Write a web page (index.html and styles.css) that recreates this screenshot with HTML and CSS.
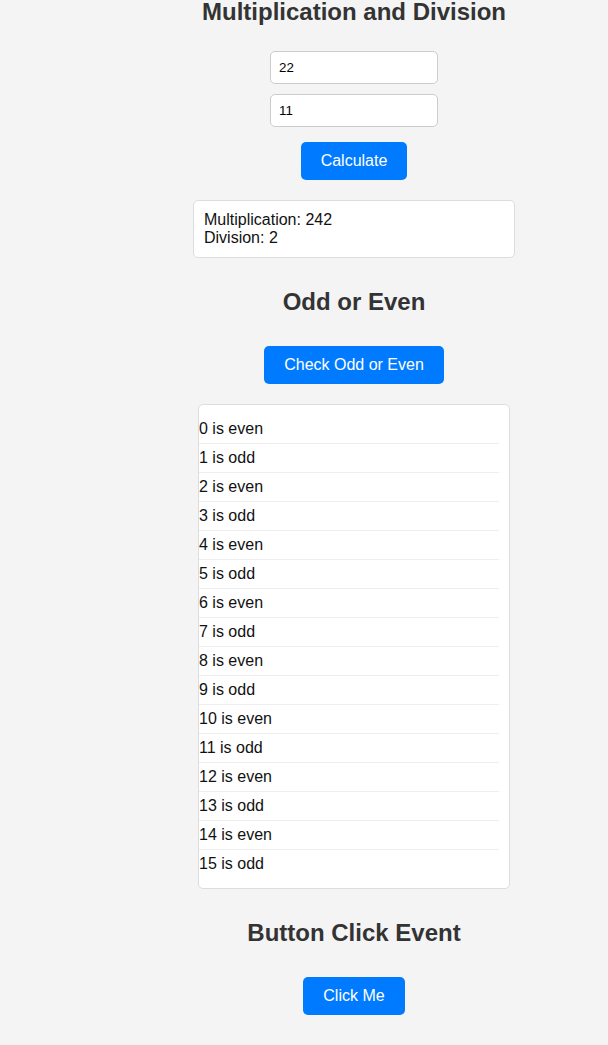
FILE: index.html
```html
<!DOCTYPE html>
<html>
<head>
<meta charset="utf-8">
<link rel="stylesheet" href="styles.css">
</head>
<body>
<main class="page">
  <section class="section">
    <h2 class="title">Multiplication and Division</h2>
    <div class="inputs">
      <input class="field" type="text" value="22">
      <input class="field" type="text" value="11">
    </div>
    <button class="btn">Calculate</button>
    <div class="result">Multiplication: 242<br>Division: 2</div>
  </section>
  <section class="section">
    <h2 class="title">Odd or Even</h2>
    <button class="btn">Check Odd or Even</button>
    <ul class="list">
      <li>0 is even</li>
      <li>1 is odd</li>
      <li>2 is even</li>
      <li>3 is odd</li>
      <li>4 is even</li>
      <li>5 is odd</li>
      <li>6 is even</li>
      <li>7 is odd</li>
      <li>8 is even</li>
      <li>9 is odd</li>
      <li>10 is even</li>
      <li>11 is odd</li>
      <li>12 is even</li>
      <li>13 is odd</li>
      <li>14 is even</li>
      <li>15 is odd</li>
    </ul>
  </section>
  <section class="section">
    <h2 class="title">Button Click Event</h2>
    <button class="btn">Click Me</button>
  </section>
</main>
</body>
</html>
```
FILE: styles.css
```css
html, body {
  margin: 0;
  padding: 0;
  background: #f4f4f4;
}
body {
  font-family: "Liberation Sans", Arial, sans-serif;
  color: #222;
  overflow: hidden;
}
.page {
  margin-left: 100px;
  margin-top: -2px;
  display: flex;
  flex-direction: column;
  align-items: center;
}
.section {
  display: flex;
  flex-direction: column;
  align-items: center;
  margin-bottom: 10px;
}
.title {
  font-size: 24px;
  font-weight: bold;
  color: #333;
  margin: 0 0 20px;
  line-height: normal;
}
.section + .section .title {
  margin-top: 20px;
}
.inputs {
  display: flex;
  flex-direction: column;
  gap: 10px;
  margin: 5px 0;
}
.field {
  width: 168px;
  padding: 8px;
  border: 1px solid #ccc;
  border-radius: 5px;
  font-family: "Liberation Sans", Arial, sans-serif;
  font-size: 13.33px;
  color: #000;
  background: #fff;
  margin: 0;
  line-height: 15px;
  height: 33px;
  box-sizing: border-box;
}
.btn {
  background: #007bff;
  color: #fff;
  border: none;
  border-radius: 5px;
  padding: 10px 20px;
  font-family: "Liberation Sans", Arial, sans-serif;
  font-size: 16px;
  line-height: 18px;
  margin: 10px 0;
  cursor: pointer;
}
.result {
  width: 300px;
  padding: 10px;
  background: #fff;
  border: 1px solid #ddd;
  border-radius: 5px;
  font-size: 16px;
  line-height: 18px;
  margin-top: 10px;
  color: #111;
}
.list {
  list-style: none;
  margin: 10px 0 0;
  padding: 10px 10px 10px 0;
  width: 300px;
  background: #fff;
  border: 1px solid #ddd;
  border-radius: 5px;
  text-align: left;
}
.list li {
  padding: 5px 0;
  font-size: 16px;
  line-height: 18px;
  border-bottom: 1px solid #eee;
  color: #111;
}
.list li:last-child {
  border-bottom: none;
}
```
